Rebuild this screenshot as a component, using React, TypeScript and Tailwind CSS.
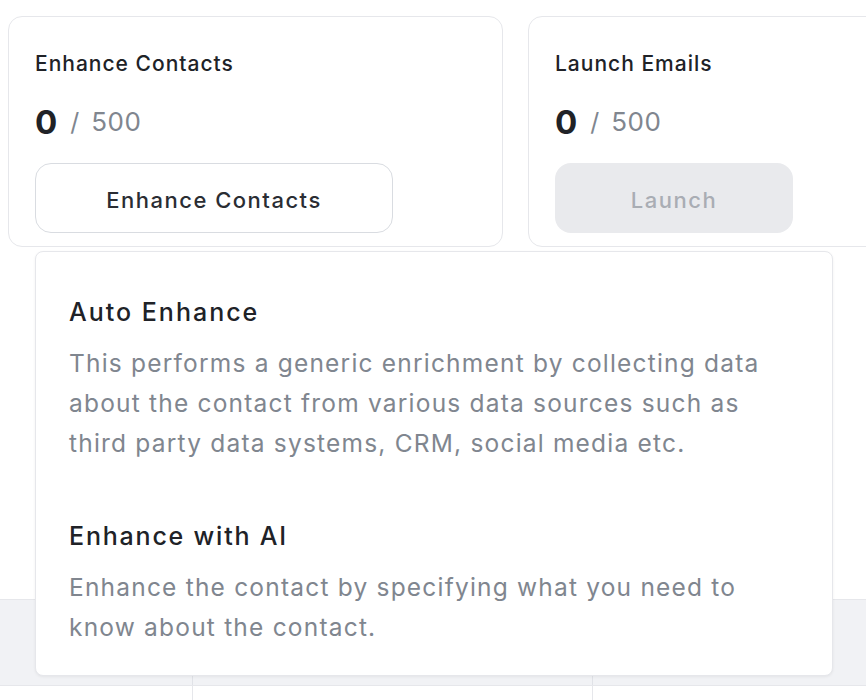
export default function App() {
  return (
    <div
      className="relative w-[866px] h-[700px] overflow-hidden bg-white text-[#202227]"
      style={{ fontFamily: "Inter, 'Noto Sans', sans-serif" }}
    >
      {/* Top cards */}
      <div className="flex gap-[25px] pl-[8px] pt-[16px]">
        <div className="w-[495px] shrink-0 rounded-[14px] border border-[#e6e7eb] pl-[26px] pt-[33px] pb-[13px]">
          <div className="text-[21px] leading-[28px] font-medium tracking-[1px]">Enhance Contacts</div>
          <div className="mt-[24px] flex items-center h-[40px] leading-[40px]">
            <span className="text-[33px] font-bold tracking-[1px]">0</span>
            <span className="ml-[12px] text-[25px] text-[#80868f]">/</span>
            <span className="ml-[12px] text-[26px] text-[#80868f] tracking-[0.5px]">500</span>
          </div>
          <button className="mt-[21px] w-[358px] h-[70px] pt-[5px] rounded-[16px] border border-[#d9dce1] bg-white text-[22px] font-medium tracking-[1.5px] text-[#2a2d33]">
            Enhance Contacts
          </button>
        </div>
        <div className="w-[495px] shrink-0 rounded-[14px] border border-[#e6e7eb] pl-[26px] pt-[33px] pb-[13px]">
          <div className="text-[21px] leading-[28px] font-medium tracking-[1px]">Launch Emails</div>
          <div className="mt-[24px] flex items-center h-[40px] leading-[40px]">
            <span className="text-[33px] font-bold tracking-[1px]">0</span>
            <span className="ml-[12px] text-[25px] text-[#80868f]">/</span>
            <span className="ml-[12px] text-[26px] text-[#80868f] tracking-[0.5px]">500</span>
          </div>
          <button className="mt-[21px] w-[238px] h-[70px] pt-[5px] rounded-[16px] bg-[#e9eaed] text-[22px] font-medium tracking-[1.5px] text-[#a9adb4]">
            Launch
          </button>
        </div>
      </div>

      {/* Table behind */}
      <div className="mt-[352px]">
        <div className="grid grid-cols-[193px_400px_1fr] h-[87px] bg-[#f1f2f5] border-t border-b border-[#e6e7eb]">
          <div className="border-r border-[#e0e2e7]" />
          <div className="border-r border-[#e0e2e7]" />
          <div />
        </div>
        <div className="grid grid-cols-[193px_400px_1fr] h-[40px] bg-white">
          <div className="border-r border-[#e6e7eb]" />
          <div className="border-r border-[#e6e7eb]" />
          <div />
        </div>
      </div>

      {/* Dropdown menu */}
      <div className="absolute left-[35px] top-[251px] w-[798px] h-[425px] rounded-[8px] border border-[#e6e7eb] bg-white shadow-[0_1px_3px_rgba(0,0,0,0.06)] pl-[33px] pr-[20px] pt-[40px]">
        <div className="text-[25px] leading-[40px] font-medium tracking-[2px] text-[#202227]">Auto Enhance</div>
        <p className="mt-[11px] text-[24.5px] leading-[40px] tracking-[1.2px] text-[#80868f]">
          This performs a generic enrichment by collecting data
          <br />
          about the contact from various data sources such as
          <br />
          third party data systems, CRM, social media etc.
        </p>
        <div className="mt-[53px] text-[25px] leading-[40px] font-medium tracking-[1.8px] text-[#202227]">Enhance with AI</div>
        <p className="mt-[11px] text-[24.5px] leading-[40px] tracking-[1.2px] text-[#80868f]">
          Enhance the contact by specifying what you need to
          <br />
          know about the contact.
        </p>
      </div>
    </div>
  );
}
